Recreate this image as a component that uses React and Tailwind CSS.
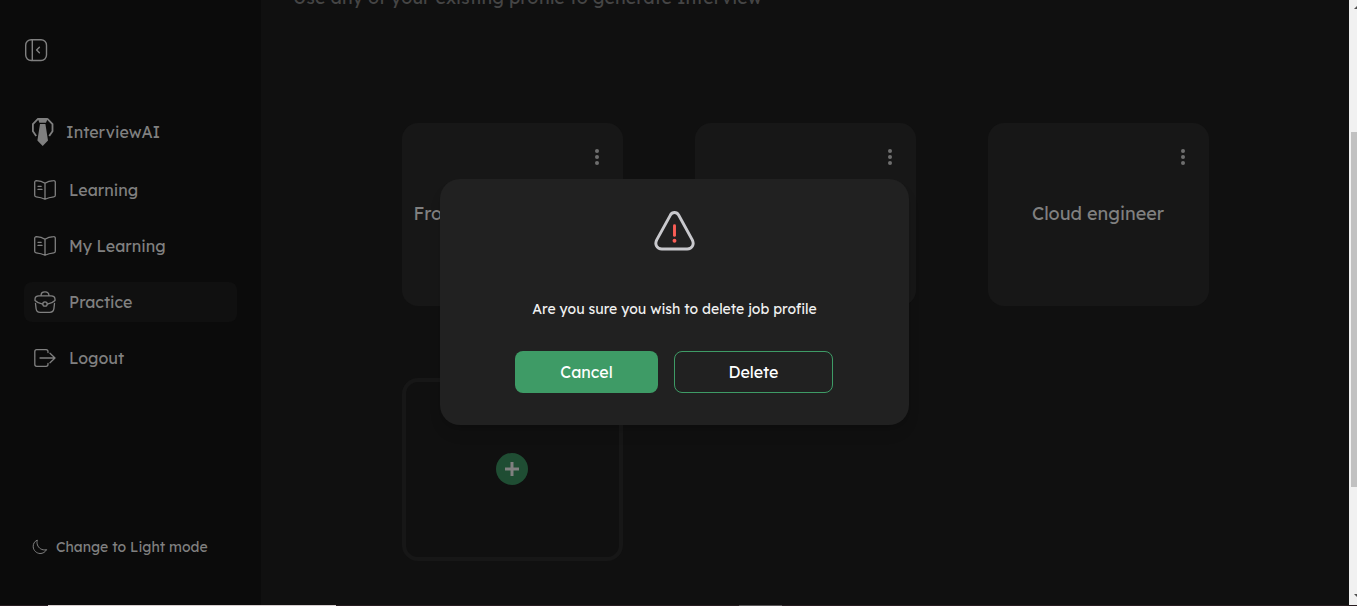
import React from "react";

const BookIcon = () => (
  <svg viewBox="0 0 22 20" className="w-[22px] h-5 shrink-0" fill="none" stroke="currentColor" strokeWidth="1.3" strokeLinecap="round" strokeLinejoin="round">
    <path d="M11 3.2C8.6 1.6 5.5.8 2.4.7 1.4.7.7 1.3.7 2.3v12.9c0 .9.6 1.5 1.5 1.6 3.2.3 6.2 1.1 8.8 2.5 2.6-1.4 5.6-2.2 8.8-2.5.9-.1 1.5-.7 1.5-1.6V2.2c0-1-.8-1.6-1.7-1.5C16.6.9 13.5 1.6 11 3.2zM11 3.2v16M4 6.3h3.2M4 9.4h4" />
  </svg>
);

const BriefcaseIcon = () => (
  <svg viewBox="0 0 22 22" className="w-[22px] h-[22px] shrink-0" fill="none" stroke="currentColor" strokeWidth="1.3" strokeLinecap="round" strokeLinejoin="round">
    <path d="M7 4.8C7 2.1 8 .8 11 .8s4 1.3 4 4M5 4.8h12c2.8 0 4 1.2 4 3.5v1.2c-2 2-4.8 3.2-7.6 3.7M8.6 13.2C5.8 12.7 3 11.5 1 9.5V8.3c0-2.3 1.2-3.5 4-3.5" />
    <path d="M1.5 12.5l.6 5.2c.3 2.3 1.3 3.6 4 3.6h9.8c2.7 0 3.7-1.3 4-3.6l.6-5.2" />
    <circle cx="11" cy="13" r="2.2" />
  </svg>
);

const LogoutIcon = () => (
  <svg viewBox="0 0 22 18" className="w-[22px] h-[18px] shrink-0" fill="none" stroke="currentColor" strokeWidth="1.3" strokeLinecap="round" strokeLinejoin="round">
    <path d="M14 3.6v-.8c0-1.3-.6-2.1-1.9-2.1H2.7C1.4.7.8 1.5.8 2.8v12.4c0 1.3.6 2.1 1.9 2.1h9.4c1.3 0 1.9-.8 1.9-2.1v-.8M6 9h15M16 4.3L21 9l-5 4.7" />
  </svg>
);

const TieLogo = () => (
  <svg viewBox="0 0 23 28" className="w-[23px] h-7 shrink-0" fill="currentColor">
    <path d="M6.5 0h10.4L15 4.8H8.4zM9 6h5.4L17 22.5 11.7 28l-5.3-5.5z" />
    <path d="M7.2.7L1.9 6v7.2L5.200 18M16.200.7L21.500 6v7.200L18.200 18" fill="none" stroke="currentColor" strokeWidth="1.8" />
  </svg>
);

const CollapseIcon = () => (
  <svg viewBox="0 0 24 24" className="w-6 h-6" fill="none" stroke="currentColor" strokeWidth="1.4" strokeLinecap="round" strokeLinejoin="round">
    <rect x="1.7" y="1.7" width="20.8" height="20.8" rx="5.5" />
    <path d="M8.3 2v20M15.4 9.2L12.6 12l2.8 2.8" />
  </svg>
);

const MoonIcon = () => (
  <svg viewBox="0 0 16 16" className="w-4 h-4 shrink-0" fill="none" stroke="currentColor" strokeWidth="1" strokeLinejoin="round">
    <path d="M5 1.2C2.5 2.4 1 4.9 1.2 7.8c.2 3.6 3.2 6.5 6.8 6.7 2.9.1 5.3-1.5 6.6-3.9-1 .4-2.3.5-3.5.2C7.6 10.1 5 7 5 3.4c0-.8 0-1.5.4-2.2z" />
  </svg>
);

const WarningIcon = () => (
  <svg viewBox="0 0 42 42" className="w-[41px] h-[41px]" fill="none" strokeLinecap="round" strokeLinejoin="round">
    <path d="M16.8 4.2c2-3.5 6.4-3.5 8.4 0l14 25.4c2.4 4.6-.2 9.4-5.2 9.4H8c-5 0-7.600-4.800-5.200-9.400z" stroke="#c9c9cd" strokeWidth="3" />
    <path d="M21 15v10" stroke="#fb5e56" strokeWidth="3" />
    <circle cx="21" cy="30.5" r="2" fill="#fb5e56" />
  </svg>
);

const DotsIcon = () => (
  <svg viewBox="0 0 4 16" className="w-1 h-4" fill="currentColor">
    <circle cx="2" cy="2" r="2" />
    <circle cx="2" cy="8" r="2" />
    <circle cx="2" cy="14" r="2" />
  </svg>
);

const navItems = [
  { label: "Learning", icon: BookIcon },
  { label: "My Learning", icon: BookIcon },
  { label: "Practice", icon: BriefcaseIcon, active: true },
  { label: "Logout", icon: LogoutIcon },
];

const profiles = ["Frontend Development", "Data engineer", "Cloud engineer"];

const Sidebar = () => (
  <aside className="w-[261px] shrink-0 flex flex-col px-6 pt-[38px] pb-12 bg-[#0b0b0b] text-[#808080]">
    <button type="button" aria-label="Collapse sidebar" className="self-start">
      <CollapseIcon />
    </button>

    <a href="#home" className="mt-14 ml-[7px] flex items-center gap-3 text-base font-normal">
      <TieLogo />
      InterviewAI
    </a>

    <nav className="mt-6 flex flex-col gap-4">
      {navItems.map(({ label, icon: Icon, active }) => (
        <a
          key={label}
          href="#nav"
          className={`flex items-center gap-[13px] h-10 pl-2.5 rounded-lg text-base font-normal ${active ? "bg-[#101010]" : ""}`}
        >
          <Icon />
          {label}
        </a>
      ))}
    </nav>

    <button type="button" className="mt-auto ml-2 flex items-center gap-2 text-sm font-normal">
      <MoonIcon />
      Change to Light mode
    </button>
  </aside>
);

const ProfileCard = ({ title }) => (
  <div className="h-[183px] flex flex-col rounded-2xl bg-[#171717] text-[#808080]">
    <button type="button" aria-label={`${title} options`} className="self-end mt-[26px] mr-6 text-[#6e6e6e]">
      <DotsIcon />
    </button>
    <h3 className="mt-[35px] px-3 text-center text-lg font-normal whitespace-nowrap">{title}</h3>
  </div>
);

const DeleteDialog = () => (
  <div className="absolute inset-0 pb-px flex items-center justify-center">
    <div role="dialog" aria-modal="true" className="w-[469px] flex flex-col items-center py-8 rounded-[20px] bg-[#212121] shadow-lg">
      <WarningIcon />
      <p className="mt-[47px] text-sm leading-5 font-normal text-[#f0f0f0]">
        Are you sure you wish to delete job profile
      </p>
      <div className="mt-8 pr-px flex gap-4 text-base font-normal text-white">
        <button type="button" className="w-[143px] h-[42px] rounded-lg bg-[#3e9b66]">Cancel</button>
        <button type="button" className="w-[159px] h-[42px] rounded-lg border border-[#3e9b66]">Delete</button>
      </div>
    </div>
  </div>
);

const Scrollbar = () => (
  <div className="w-2 shrink-0 flex flex-col items-end justify-between bg-[#f1f1f1] overflow-hidden">
    <svg viewBox="0 0 3 3" className="mt-1.5 w-[3px] h-[3px]" fill="#505050">
      <path d="M0 3L3 0v3z" />
    </svg>
    <div className="mt-4 w-1.5 h-[355px] bg-[#c1c1c1]" />
    <svg viewBox="0 0 3 3" className="mb-2 w-[3px] h-[3px]" fill="#505050">
      <path d="M0 0h3v3z" />
    </svg>
  </div>
);

export default function App() {
  return (
    <div className="h-screen flex flex-col overflow-hidden bg-[#101010] font-['Lexend','Inter',sans-serif]">
      <div className="flex-1 min-h-0 flex">
        <div className="relative flex-1 min-w-0 flex">
          <Sidebar />
          <main className="flex-1 min-w-0 overflow-hidden">
            <p className="-mt-4 ml-8 text-lg leading-7 font-normal text-[#454545]">
              Use any of your existing profile to generate Interview
            </p>
            <div className="mt-[111px] grid grid-cols-[repeat(3,221px)] justify-center gap-[72px]">
              {profiles.map((title) => (
                <ProfileCard key={title} title={title} />
              ))}
              <div className="h-[183px] pb-px flex items-center justify-center rounded-2xl border-4 border-[#171717]">
                <button type="button" aria-label="Add job profile" className="w-8 h-8 flex items-center justify-center rounded-full bg-[#1f4d33] text-[#808080]">
                  <svg viewBox="0 0 14 14" className="w-3.5 h-3.5" stroke="currentColor" strokeWidth="3">
                    <path d="M7 0v14M0 7h14" />
                  </svg>
                </button>
              </div>
            </div>
          </main>
          <DeleteDialog />
        </div>
        <Scrollbar />
      </div>

      {/* Window edge */}
      <div className="h-px shrink-0 flex bg-[#271c20]">
        <div className="ml-12 w-72 bg-[#d6cdce]" />
        <div className="ml-[403px] w-[43px] bg-[#595456]" />
      </div>
    </div>
  );
}
